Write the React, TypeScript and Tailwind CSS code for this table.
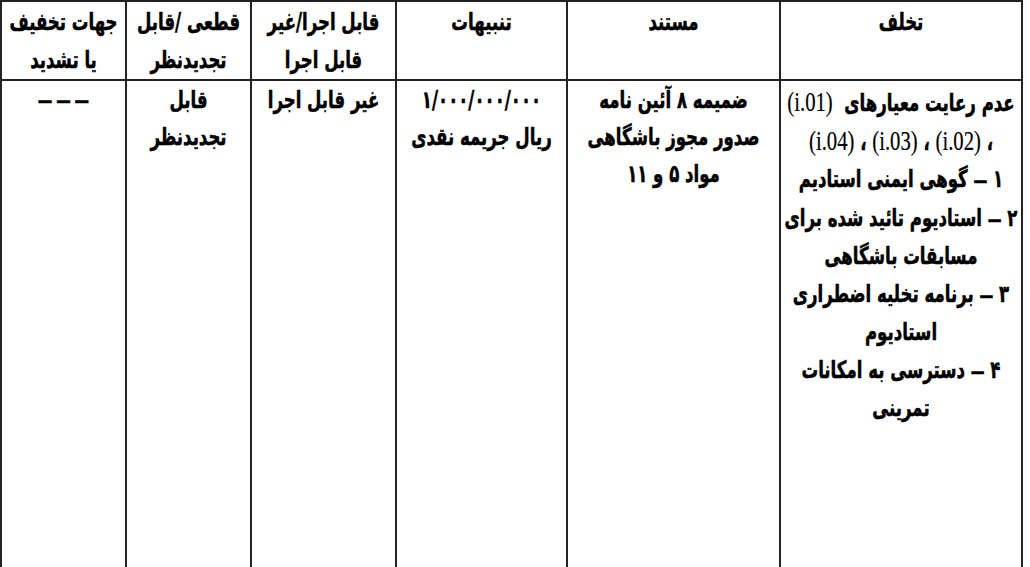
import React from "react";

const Ref = ({ t }: { t: string }) => (
  <span className="font-['Liberation_Serif',serif] font-normal text-[27px] [-webkit-text-stroke:0.2px_black]">({t})</span>
);

const Dash = () => <span className="text-[20px]">—</span>;

const Cell = ({
  head,
  first,
  children,
}: {
  head?: boolean;
  first?: boolean;
  children: React.ReactNode;
}) => (
  <div
    className={
      head
        ? "border-l-2 border-b-2 border-[#222] pt-[1px] leading-[38px]"
        : first
        ? "border-l-2 border-[#222] pt-[3px] leading-[37.5px]"
        : "border-l-2 border-[#222] pt-[1px] leading-[37px]"
    }
  >
    <div className="flex flex-col items-center scale-x-[0.767] origin-center">{children}</div>
  </div>
);

export default function App() {
  return (
    <div className="w-[1030px] h-[567px] bg-white overflow-hidden">
      <div
        dir="rtl"
        className="w-[1023px] h-[567px] border-t-2 border-r-2 border-[#222] grid grid-cols-[242px_213px_171px_145px_125px_125px] grid-rows-[79px_1fr] font-['DejaVu_Sans_Condensed','DejaVu_Sans',sans-serif] font-bold text-[24px] text-black [-webkit-text-stroke:0.5px_black] whitespace-nowrap"
      >
        {/* header row */}
        <Cell head>
          <div>تخلف</div>
        </Cell>
        <Cell head>
          <div>مستند</div>
        </Cell>
        <Cell head>
          <div>تنبیهات</div>
        </Cell>
        <Cell head>
          <div>قابل اجرا/غیر</div>
          <div>قابل اجرا</div>
        </Cell>
        <Cell head>
          <div>قطعی /قابل</div>
          <div>تجدیدنظر</div>
        </Cell>
        <Cell head>
          <div>جهات تخفیف</div>
          <div>یا تشدید</div>
        </Cell>

        {/* body row */}
        <Cell first>
          <div>
            عدم رعایت معیارهای&nbsp; <Ref t="i.01" />
          </div>
          <div>
            ،&nbsp;<Ref t="i.02" />&nbsp;،&nbsp;<Ref t="i.03" />&nbsp;،&nbsp;<Ref t="i.04" />
          </div>
          <div>۱ <Dash /> گوهی ایمنی استادیم</div>
          <div>۲ <Dash /> استادیوم تائید شده برای</div>
          <div>مسابقات باشگاهی</div>
          <div>۳ <Dash /> برنامه تخلیه اضطراری</div>
          <div>استادیوم</div>
          <div>۴ <Dash /> دسترسی به امکانات</div>
          <div>تمرینی</div>
        </Cell>
        <Cell>
          <div>ضمیمه ۸ آئین نامه</div>
          <div>صدور مجوز باشگاهی</div>
          <div>مواد ۵ و ۱۱</div>
        </Cell>
        <Cell>
          <div>۱/۰۰۰/۰۰۰/۰۰۰</div>
          <div>ریال جریمه نقدی</div>
        </Cell>
        <Cell>
          <div>غیر قابل اجرا</div>
        </Cell>
        <Cell>
          <div>قابل</div>
          <div>تجدیدنظر</div>
        </Cell>
        <Cell>
          <div dir="ltr" className="font-['DejaVu_Sans',sans-serif] text-[19px] tracking-[5px] pl-[5px]">———</div>
        </Cell>
      </div>
    </div>
  );
}
